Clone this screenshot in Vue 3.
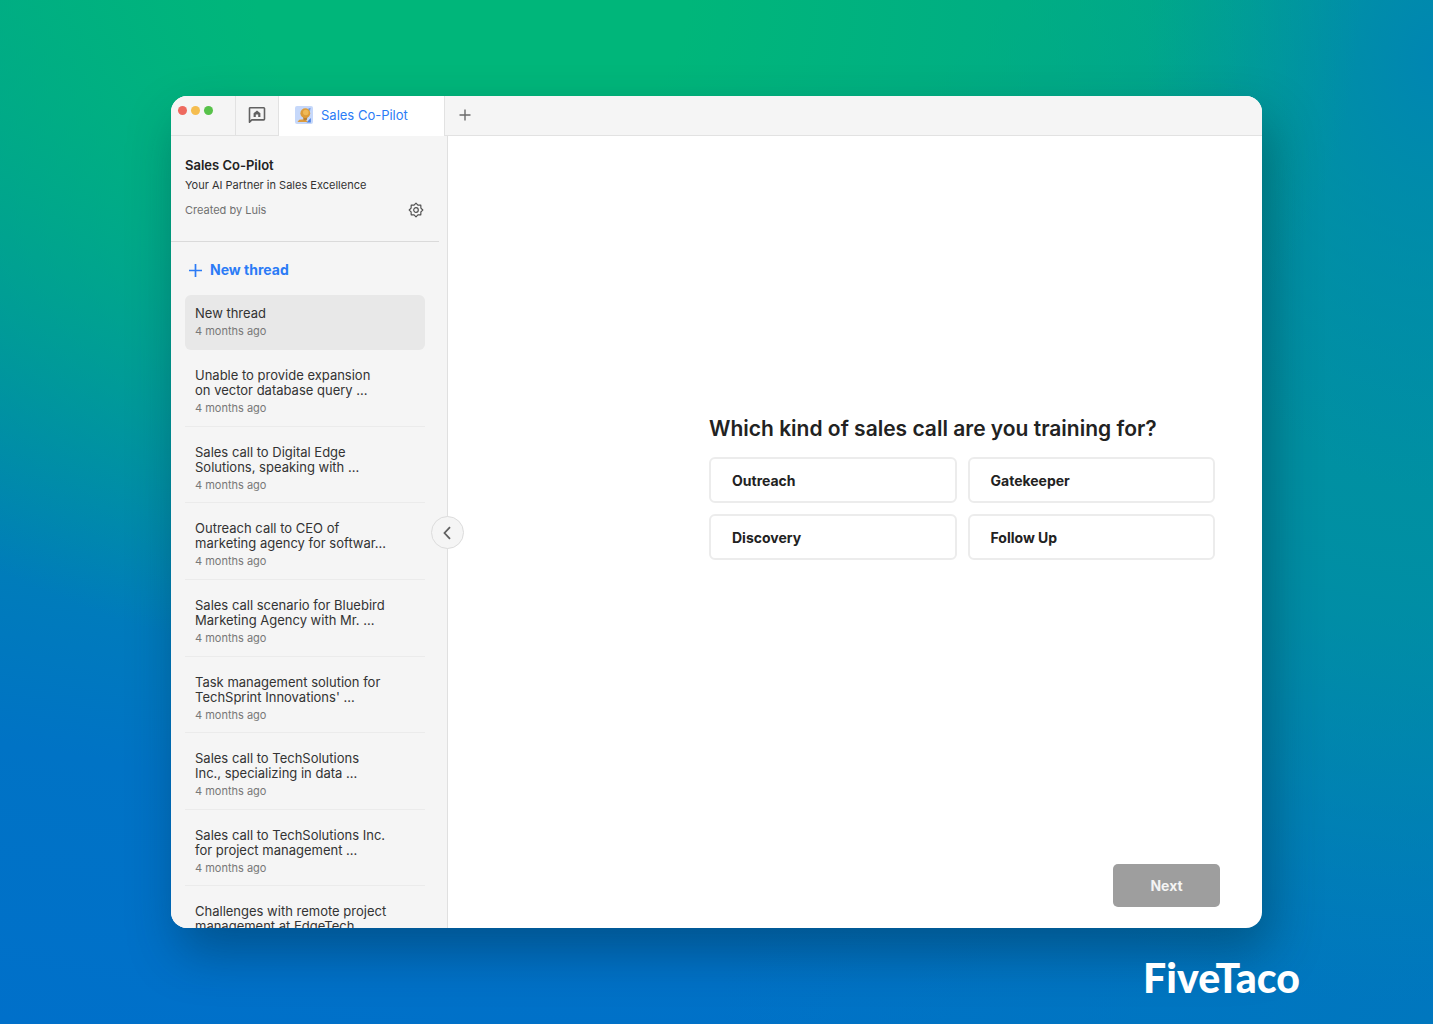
<script setup>
import { ref } from 'vue'

const threads = [
  { title: ['New thread'], time: '4 months ago', active: true },
  { title: ['Unable to provide expansion', 'on vector database query ...'], time: '4 months ago' },
  { title: ['Sales call to Digital Edge', 'Solutions, speaking with ...'], time: '4 months ago' },
  { title: ['Outreach call to CEO of', 'marketing agency for softwar...'], time: '4 months ago' },
  { title: ['Sales call scenario for Bluebird', 'Marketing Agency with Mr. ...'], time: '4 months ago' },
  { title: ['Task management solution for', "TechSprint Innovations' ..."], time: '4 months ago' },
  { title: ['Sales call to TechSolutions', 'Inc., specializing in data ...'], time: '4 months ago' },
  { title: ['Sales call to TechSolutions Inc.', 'for project management ...'], time: '4 months ago' },
  { title: ['Challenges with remote project', 'management at EdgeTech'] },
]

const options = ['Outreach', 'Gatekeeper', 'Discovery', 'Follow Up']
const selected = ref('')
</script>

<template>
  <div class="page">
    <div class="window">
      <header class="tabs">
        <div class="lights">
          <span class="light red"></span>
          <span class="light amber"></span>
          <span class="light green"></span>
        </div>
        <button class="home" aria-label="Home">
          <svg viewBox="0 0 18 18" width="18" height="18" fill="none" stroke="#626262" stroke-width="1.6" stroke-linejoin="round">
            <path d="M1.500 16.200V2.500a.8.8 0 0 1 .8-.8h13.400a.8.8 0 0 1 .8.8v10.600a.8.8 0 0 1-.8.8H3.800z" />
            <path d="M5.600 11V7.300L9 4.500l3.400 2.800V11h-2.200V8.600H7.800V11z" fill="#626262" stroke="none" />
          </svg>
        </button>
        <button class="tab">
          <svg viewBox="0 0 18 18" width="18" height="18">
            <rect width="18" height="18" rx="2" fill="#c6d8fa" />
            <path d="M11.500 16.500 15.800 12v4.500z" fill="#4b83e6" />
            <path d="M12.600 3 15.600 1.800 15 5.200z" fill="#6d9bea" />
            <path d="M2.500 16 4.200 13.800l5.600-.6 3.200 2.800z" fill="#dd9c40" />
            <path d="M8 11h4.400l-.6 3.200H8.600z" fill="#b9802f" />
            <circle cx="10.300" cy="7.200" r="4.900" fill="#dd9c38" />
            <circle cx="10.800" cy="6.500" r="2.800" fill="#f0b955" />
          </svg>
          Sales Co-Pilot
        </button>
        <button class="add" aria-label="New tab">
          <svg viewBox="0 0 12 12" width="12" height="12" stroke="#6a6a6a" stroke-width="1.4"><path d="M6 .5v11M.5 6h11" /></svg>
        </button>
      </header>

      <div class="body">
        <aside class="sidebar">
          <div class="about">
            <h1>Sales Co-Pilot</h1>
            <p class="tagline">Your AI Partner in Sales Excellence</p>
            <div class="author">
              <span>Created by Luis</span>
              <button class="settings" aria-label="Settings">
                <svg viewBox="0 0 16 16" width="16" height="16" fill="none" stroke="#505050" stroke-width="1.2" stroke-linejoin="round">
                  <path d="M8 1.200 9.900 3.100 12.800 3.200 12.900 6.100 14.800 8 12.900 9.900 12.800 12.800 9.900 12.900 8 14.800 6.100 12.900 3.200 12.800 3.100 9.900 1.200 8 3.100 6.100 3.200 3.200 6.100 3.100z" />
                  <circle cx="8" cy="8" r="2.300" />
                </svg>
              </button>
            </div>
          </div>
          <button class="new-thread">
            <svg viewBox="0 0 13 13" width="13" height="13" stroke="currentColor" stroke-width="1.7"><path d="M6.500 0v13M0 6.500h13" /></svg>
            New thread
          </button>
          <ul class="threads">
            <li v-for="(t, i) in threads" :key="i" :class="{ active: t.active }">
              <a href="#">
                <span v-for="line in t.title" :key="line" class="line">{{ line }}</span>
                <span v-if="t.time" class="time">{{ t.time }}</span>
              </a>
            </li>
          </ul>
          <button class="collapse" aria-label="Collapse sidebar">
            <svg viewBox="0 0 8 14" width="8" height="14" fill="none" stroke="#606060" stroke-width="1.8"><path d="M7 1.200 1.500 7 7 12.800" /></svg>
          </button>
        </aside>

        <main class="main">
          <section class="question">
            <h2>Which kind of sales call are you training for?</h2>
            <div class="options">
              <button v-for="o in options" :key="o" class="option" @click="selected = o">{{ o }}</button>
            </div>
          </section>
          <button class="next">Next</button>
        </main>
      </div>
    </div>
    <footer class="brand">FiveTaco</footer>
  </div>
</template>

<style>
body {
  margin: 0;
}
</style>

<style scoped>
.page {
  box-sizing: border-box;
  height: 100vh;
  padding: 96px 171px 0;
  display: flex;
  flex-direction: column;
  overflow: hidden;
  font-family: Inter, "Liberation Sans", sans-serif;
  color: #222;
  background:
    radial-gradient(ellipse 62% 66% at 33% 0%, #00b67a 0%, #00b67a 24%, rgba(0, 182, 122, 0) 100%),
    radial-gradient(ellipse 20% 42% at 100% 6%, #0086b2 0%, rgba(0, 134, 178, 0) 100%),
    radial-gradient(ellipse 40% 56% at 97% 42%, #0090a2 0%, rgba(0, 144, 162, 0) 100%),
    radial-gradient(ellipse 50% 40% at 100% 100%, #0077be 0%, rgba(0, 119, 190, 0) 100%),
    linear-gradient(10deg, #0070ca 0%, #0073c5 22%, #0085b0 48%, #00a58d 85%);
}
button {
  font: inherit;
  color: inherit;
  border: 0;
  padding: 0;
  background: none;
}
h1, h2, p, ul {
  margin: 0;
  padding: 0;
}
.window {
  flex: 1;
  min-height: 0;
  display: flex;
  flex-direction: column;
  border-radius: 16px;
  overflow: hidden;
  background: #fff;
  box-shadow: 8px 24px 50px rgba(0, 40, 60, 0.4);
}
.tabs {
  display: flex;
  height: 40px;
  flex: none;
  background: linear-gradient(#e2e2e2, #e2e2e2) bottom / 100% 1px no-repeat #f5f5f5;
}
.lights {
  width: 64px;
  display: flex;
  gap: 4px;
  padding: 10px 0 0 7px;
  box-sizing: border-box;
}
.light {
  width: 9px;
  height: 9px;
  border-radius: 50%;
}
.red { background: #ee6a5f; }
.amber { background: #f5bd4f; }
.green { background: #57c24a; }
.home {
  width: 44px;
  box-sizing: border-box;
  border: solid #e2e2e2;
  border-width: 0 1px;
  padding-bottom: 2px;
  display: grid;
  place-items: center;
}
.tab {
  width: 165px;
  display: flex;
  align-items: center;
  gap: 8px;
  padding: 0 0 2px 16px;
  font-size: 13px;
  color: #2b7bf6;
  background: #fff;
}
.add {
  width: 40px;
  border-left: 1px solid #e2e2e2;
  padding-bottom: 2px;
  display: grid;
  place-items: center;
}
.body {
  flex: 1;
  min-height: 0;
  display: flex;
}
.sidebar {
  position: relative;
  width: 277px;
  box-sizing: border-box;
  flex: none;
  background: #f5f5f5;
  border-right: 1px solid #e0e0e0;
}
.about {
  margin-right: 8px;
  padding: 20px 15px 23px 14px;
  border-bottom: 1px solid #dadada;
}
h1 {
  font-size: 13px;
  line-height: 18px;
  font-weight: 600;
}
.tagline {
  margin-top: 4px;
  font-size: 11px;
  line-height: 15px;
  color: #333;
}
.author {
  display: flex;
  align-items: center;
  justify-content: space-between;
  margin-top: 8px;
  height: 17px;
  font-size: 11px;
  color: #707070;
}
.settings {
  display: flex;
}
.new-thread {
  display: flex;
  align-items: center;
  gap: 8px;
  margin: 18px 0 15px 18px;
  font-size: 14px;
  line-height: 20px;
  font-weight: 700;
  color: #2b7bf6;
}
.threads {
  list-style: none;
  display: grid;
  grid-template-rows: 55px repeat(8, 1fr);
  height: 668px;
  margin: 0 22px 0 14px;
}
.threads li {
  min-height: 0;
  border-bottom: 1px solid #ebebeb;
}
.threads .active {
  background: #e8e8e8;
  border: 0;
  border-radius: 6px;
}
.threads a {
  display: block;
  padding: 18px 10px 0;
  color: #333;
  text-decoration: none;
}
.threads .active a {
  padding-top: 11px;
}
.line {
  display: block;
  font-size: 13px;
  line-height: 15px;
}
.time {
  display: block;
  margin-top: 3px;
  font-size: 11px;
  line-height: 15px;
  color: #787878;
}
.collapse {
  position: absolute;
  right: -17px;
  top: calc(50% - 16px);
  width: 33px;
  height: 33px;
  padding-right: 2px;
  border: 1px solid #dcdcdc;
  border-radius: 50%;
  background: #f5f5f5;
  display: grid;
  place-items: center;
}
.main {
  flex: 1;
  min-width: 0;
  display: flex;
  flex-direction: column;
  align-items: flex-end;
  padding: 0 42px 21px;
}
.question {
  flex: 1;
  display: flex;
  flex-direction: column;
  justify-content: center;
  width: 506px;
  max-width: 100%;
  margin-right: 5px;
  padding-bottom: 25px;
}
h2 {
  font-size: 21px;
  line-height: 28px;
  font-weight: 600;
  margin-bottom: 14px;
}
.options {
  display: grid;
  grid-template-columns: 1fr 1fr;
  gap: 11px;
}
.option {
  height: 46px;
  padding-left: 21px;
  text-align: left;
  font-size: 14px;
  font-weight: 700;
  border: 2px solid #ececec;
  border-radius: 6px;
}
.next {
  width: 107px;
  height: 43px;
  border-radius: 5px;
  background: #9e9e9e;
  color: #f4f4f4;
  font-size: 14px;
  font-weight: 700;
}
.brand {
  flex: none;
  height: 96px;
  box-sizing: border-box;
  padding-top: 26px;
  margin-right: -38px;
  text-align: right;
  font-family: Lato, sans-serif;
  font-weight: 900;
  font-size: 41px;
  line-height: 48px;
  color: #fff;
}
</style>
